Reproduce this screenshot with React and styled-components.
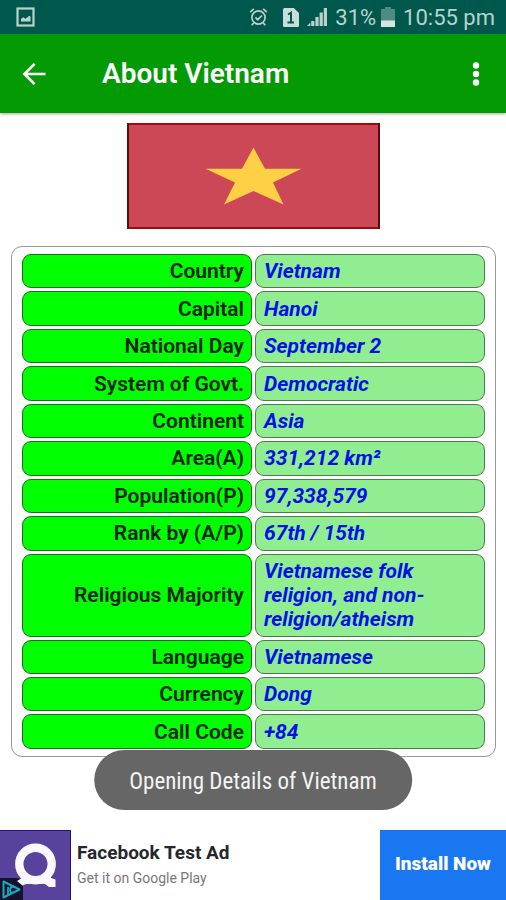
import styled, { createGlobalStyle } from "styled-components";

const GlobalStyle = createGlobalStyle`
  *, *::before, *::after {
    box-sizing: border-box;
  }

  body {
    margin: 0;
    background-color: #fff;
    font-family: Roboto, "Noto Sans", sans-serif;
  }

  button {
    font-family: inherit;
    border: none;
    padding: 0;
    cursor: pointer;
  }
`;

const Page = styled.div`
  display: flex;
  flex-direction: column;
  min-height: 100vh;
`;

const StatusBar = styled.div`
  display: flex;
  align-items: center;
  justify-content: space-between;
  height: 34px;
  padding: 0 11px 0 16px;
  background-color: #00574b;
  color: #b9d2ce;
  font-size: 22px;
`;

const StatusGroup = styled.div`
  display: flex;
  align-items: center;
  gap: ${(props) => props.$gap || 8}px;

  svg {
    display: block;
  }
`;

const AppBar = styled.header`
  display: flex;
  align-items: center;
  height: 79px;
  padding: 0 10px 0 14px;
  background-color: #049a04;
  color: #fff;
  box-shadow: 0 1px 3px rgba(0, 0, 0, 0.35);
`;

const IconButton = styled.button`
  display: grid;
  place-items: center;
  width: 40px;
  height: 40px;
  background: none;
  color: inherit;
`;

const Title = styled.h1`
  flex: 1;
  margin: 0;
  padding-left: 48px;
  font-size: 28px;
  line-height: 32px;
  font-weight: 600;
`;

const Main = styled.main`
  flex: 1;
  display: flex;
  flex-direction: column;
  padding: 10px 10px 73px 11px;
`;

const Flag = styled.svg`
  display: block;
  align-self: center;
  width: 253px;
  height: 106px;
  margin-bottom: 17px;
`;

const Card = styled.section`
  flex: 1;
  display: flex;
  border: 1px solid #999;
  border-radius: 11px;
  padding: 4px 7px;
`;

const Table = styled.table`
  flex: 1;
  border-collapse: separate;
  border-spacing: 3px;
  table-layout: fixed;
  font-size: 21px;
  line-height: 24px;
`;

const Label = styled.th`
  width: 50%;
  padding: 4px 7px;
  border: 1px solid #197019;
  border-radius: 9px;
  background-color: #00ff00;
  color: #062406;
  font-weight: 600;
  text-align: right;
`;

const Value = styled.td`
  padding: 4px 8px;
  border: 1px solid #4b7c4b;
  border-radius: 9px;
  background-color: #90ee90;
  color: #0010e6;
  font-weight: 700;
  font-style: italic;
`;

const Toast = styled.div`
  position: fixed;
  bottom: 90px;
  left: 50%;
  transform: translateX(-50%);
  padding: 20px 35px 16px;
  border-radius: 30px;
  background-color: #666;
  color: #f4f4f4;
  font-family: "Roboto Condensed", Roboto, sans-serif;
  font-size: 23px;
  line-height: 24px;
  white-space: nowrap;
`;

const Ad = styled.aside`
  display: flex;
  height: 70px;
  background-color: #fff;
`;

const AdLogo = styled.svg`
  flex: none;
  width: 71px;
  height: 70px;
`;

const AdText = styled.div`
  flex: 1;
  padding: 12px 6px 0;
`;

const AdTitle = styled.div`
  color: #24272c;
  font-size: 19px;
  line-height: 22px;
  font-weight: 700;
`;

const AdSubtitle = styled.div`
  margin-top: 4px;
  color: #777;
  font-size: 14px;
  line-height: 20px;
`;

const InstallButton = styled.button`
  width: 126px;
  padding-bottom: 3px;
  background-color: #1977f2;
  color: #fff;
  font-size: 19px;
  font-weight: 900;
`;

const details = [
  ["Country", "Vietnam"],
  ["Capital", "Hanoi"],
  ["National Day", "September 2"],
  ["System of Govt.", "Democratic"],
  ["Continent", "Asia"],
  ["Area(A)", "331,212 km²"],
  ["Population(P)", "97,338,579"],
  ["Rank by (A/P)", "67th / 15th"],
  ["Religious Majority", "Vietnamese folk religion, and non-religion/atheism"],
  ["Language", "Vietnamese"],
  ["Currency", "Dong"],
  ["Call Code", "+84"],
];

function PictureIcon() {
  return (
    <svg width="19" height="20" viewBox="0 0 19 20">
      <rect x="1.5" y="1.5" width="16" height="17" fill="none" stroke="currentColor" strokeWidth="2.2" />
      <path d="M5 14.5V12l2.3-1.8 2.2 1.6 3.8-3 1.2.8v4.9z" fill="currentColor" />
    </svg>
  );
}

function AlarmIcon() {
  return (
    <svg width="19" height="20" viewBox="0 0 19 20" fill="none" stroke="currentColor" strokeWidth="1.7">
      <circle cx="9.5" cy="10.5" r="6.6" />
      <path d="M6.4 10.4l2.3 2.3 4.2-4.2M1.2 5.2l3.6-3.4M17.8 5.2l-3.6-3.4M4.6 16l-1.8 2.2M14.4 16l1.8 2.2" />
    </svg>
  );
}

function SimIcon() {
  return (
    <svg width="16" height="19" viewBox="0 0 16 19">
      <path
        d="M1.5 0h9.3L16 5v12.5a1.5 1.5 0 0 1-1.5 1.5h-13A1.5 1.5 0 0 1 0 17.5v-16A1.5 1.5 0 0 1 1.5 0z"
        fill="#c9dedb"
      />
      <path d="M5 6.5l3-1.8V14M4.5 14.5h6.5" fill="none" stroke="#00574b" strokeWidth="2" />
    </svg>
  );
}

function SignalIcon() {
  return (
    <svg width="20" height="20" viewBox="0 0 20 20" fill="currentColor">
      <path d="M0 19l3.4-3.4V19zM4.2 14h3.2v5H4.2zM8.4 10h3.2v9H8.4zM12.6 5.5h3.2V19h-3.2zM16.8 1H20v18h-3.2z" />
    </svg>
  );
}

function BatteryIcon() {
  return (
    <svg width="14" height="20" viewBox="0 0 14 20">
      <path d="M4 0h6v2h4v18H0V2h4z" fill="#4e8c83" />
      <path d="M0 13.5h14V20H0z" fill="#d3e4e1" />
    </svg>
  );
}

function BackIcon() {
  return (
    <svg width="24" height="24" viewBox="0 0 24 24" fill="none" stroke="currentColor" strokeWidth="2.6">
      <path d="M23.5 12H2.5M12.6 1.8L2.4 12l10.2 10.2" />
    </svg>
  );
}

function MoreIcon() {
  return (
    <svg width="8" height="24" viewBox="0 0 8 24" fill="currentColor">
      <circle cx="4" cy="3.5" r="3.2" />
      <circle cx="4" cy="12" r="3.2" />
      <circle cx="4" cy="20.5" r="3.2" />
    </svg>
  );
}

function VietnamFlag() {
  return (
    <Flag viewBox="0 0 253 106" role="img" aria-label="Flag of Vietnam">
      <rect width="253" height="106" fill="#cd4856" />
      <path d="M0 1h253M0 105h253" stroke="#9c0a12" strokeWidth="2" />
      <path d="M1 0v106M252 0v106" stroke="#5e0a10" strokeWidth="2" />
      <path
        d="M126.5 24.5L138 45.8h36.5L146 59.5l10.5 22L126.5 68 97 81.5l11-22L78.5 45.8H115z"
        fill="#ffcf45"
      />
    </Flag>
  );
}

function AudienceLogo() {
  return (
    <AdLogo viewBox="0 0 71 70" aria-hidden="true">
      <rect width="71" height="70" fill="#57429c" />
      <path d="M0 .5h70.5V70" fill="none" stroke="#2d0b80" />
      <path d="M0 48h16q7 0 7 7v15H0z" fill="#17122b" />
      <path
        d="M21 43h29l1 5 4.5 1.5V57H49l-4-3H26l-3.5 1.5-5.500-4.500 5-3z"
        fill="#fcf8ff"
      />
      <circle cx="35.5" cy="34" r="16.2" fill="#57429c" stroke="#fcf8ff" strokeWidth="8.4" />
      <path d="M3.5 51.5l16 8-16 8z" fill="none" stroke="#18a9c0" strokeWidth="2" strokeLinejoin="round" />
      <path d="M8 57v8M14 56.5q-4 0-4 3.5t4 2.5" fill="none" stroke="#18a9c0" strokeWidth="1.8" />
    </AdLogo>
  );
}

export default function App() {
  return (
    <>
      <GlobalStyle />
      <Page>
        <StatusBar>
          <PictureIcon />
          <StatusGroup>
            <StatusGroup $gap={15}>
              <AlarmIcon />
              <SimIcon />
            </StatusGroup>
            <SignalIcon />
            <StatusGroup $gap={5}>
              31%
              <BatteryIcon />
            </StatusGroup>
            <span>10:55 pm</span>
          </StatusGroup>
        </StatusBar>

        <AppBar>
          <IconButton aria-label="Back">
            <BackIcon />
          </IconButton>
          <Title>About Vietnam</Title>
          <IconButton aria-label="More options">
            <MoreIcon />
          </IconButton>
        </AppBar>

        <Main>
          <VietnamFlag />
          <Card>
            <Table>
              <tbody>
                {details.map(([label, value]) => (
                  <tr key={label}>
                    <Label scope="row">{label}</Label>
                    <Value>{value}</Value>
                  </tr>
                ))}
              </tbody>
            </Table>
          </Card>
        </Main>

        <Ad>
          <AudienceLogo />
          <AdText>
            <AdTitle>Facebook Test Ad</AdTitle>
            <AdSubtitle>Get it on Google Play</AdSubtitle>
          </AdText>
          <InstallButton>Install Now</InstallButton>
        </Ad>
      </Page>
      <Toast role="status">Opening Details of Vietnam</Toast>
    </>
  );
}
